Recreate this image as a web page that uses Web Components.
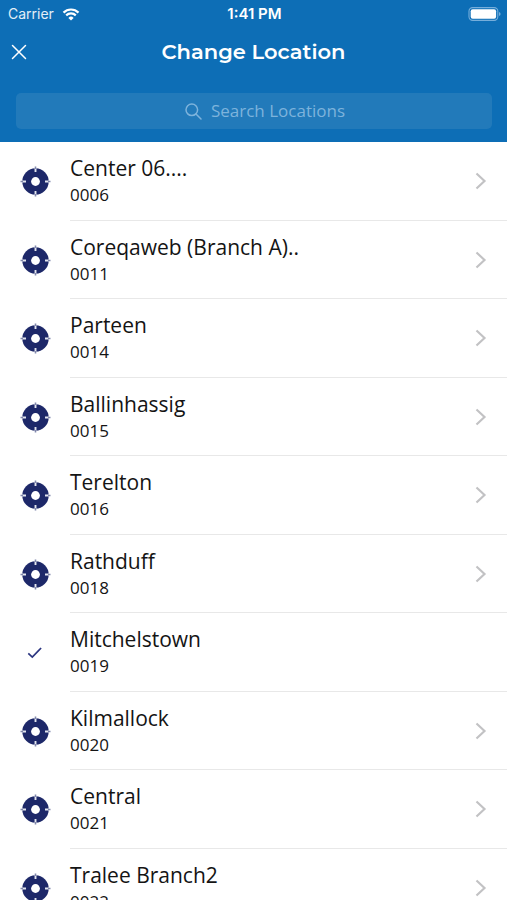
<!DOCTYPE html>
<html lang="en">
<head>
<meta charset="utf-8">
<meta name="viewport" content="width=device-width, initial-scale=1">
<title>Change Location</title>
<style>
  html, body { margin: 0; height: 100%; background: #fff; }
</style>
</head>
<body>
<location-screen></location-screen>
<script>
  const define = (name, html, setup) => {
    const template = document.createElement('template');
    template.innerHTML = html;
    customElements.define(name, class extends HTMLElement {
      constructor() {
        super();
        this.attachShadow({ mode: 'open' }).append(template.content.cloneNode(true));
      }
      connectedCallback() { if (setup) setup(this, this.shadowRoot); }
    });
  };

  define('status-bar', `
    <style>
      :host { display: grid; grid-template-columns: 1fr auto 1fr; align-items: center; height: 28px; padding: 0 6px 0 8px;
        font: 14px/28px Inter, "Liberation Sans", sans-serif; color: #fff; }
      .carrier { display: flex; align-items: center; gap: 8px; color: #e3eef7; }
      .time { font-size: 15px; font-weight: 600; }
      .battery { justify-self: end; }
      svg { display: block; }
    </style>
    <span class="carrier"><span>Carrier</span>
      <svg width="18" height="13" viewBox="0 0 17 13" fill="none" stroke="#fff" stroke-width="2.2" aria-label="Wi-Fi">
        <path d="M1 4.6a10.6 10.6 0 0 1 15 0M3.7 7.4a6.8 6.8 0 0 1 9.6 0"/>
        <path d="M8.500 12.600 5.900 9.900a3.700 3.700 0 0 1 5.200 0z" fill="#fff" stroke="none"/>
      </svg>
    </span>
    <span class="time">1:41 PM</span>
    <svg class="battery" width="33" height="14" viewBox="0 0 33 14" aria-label="Battery full">
      <rect x="1" y=".6" width="28.800" height="12.800" rx="3.600" fill="none" stroke="#76aedb" stroke-width="1.100"/>
      <rect x="2.700" y="2.300" width="25.400" height="9.400" rx="2" fill="#fff"/>
      <path d="M31 5v4q1.600-.5 1.600-2t-1.600-2" fill="#76aedb"/>
    </svg>`);

  define('title-bar', `
    <style>
      :host { display: grid; grid-template-columns: 38px 1fr 38px; align-items: center; height: 48px; color: #fff; }
      h1 { margin: 0; text-align: center; font: 600 21px/48px Montserrat, Inter, sans-serif; }
      button { display: grid; place-items: center; height: 38px; padding: 0; border: 0; background: none; color: inherit; cursor: pointer; }
    </style>
    <button type="button" aria-label="Close">
      <svg width="16" height="16" viewBox="0 0 16 16" fill="none" stroke="currentColor" stroke-width="1.500" stroke-linecap="round"><path d="M1.500 1.500l13 13M14.500 1.500l-13 13"/></svg>
    </button>
    <h1><slot></slot></h1>`);

  define('search-field', `
    <style>
      :host { display: block; padding: 17px 15px 13px 16px; }
      label { display: flex; justify-content: center; align-items: center; gap: 9px; height: 36px; padding-left: 22px; border-radius: 5px;
        background: #227aba; color: #7db3dc; cursor: text; }
      input { field-sizing: content; width: auto; padding: 0; border: 0; outline: 0; background: none; color: #fff;
        font: 17px/24px "Open Sans", "Noto Sans", sans-serif; }
      input::placeholder { color: #7db3dc; opacity: 1; }
    </style>
    <label>
      <svg width="17" height="17" viewBox="0 0 17 17" fill="none" stroke="currentColor" stroke-width="1.500" stroke-linecap="round"><circle cx="6.800" cy="6.800" r="5.800"/><path d="M11 11l5 5"/></svg>
      <input type="text" placeholder="Search Locations" aria-label="Search Locations">
    </label>`);

  define('location-row', `
    <style>
      :host { display: block; }
      button { display: flex; width: 100%; padding: 0; border: 0; background: none; text-align: left; color: #141414; cursor: pointer;
        font-family: "Open Sans", "Noto Sans", sans-serif; }
      .mark { flex: 0 0 70px; display: grid; place-items: center start; padding-left: 20px; box-sizing: border-box; }
      .body { flex: 1; display: flex; align-items: center; justify-content: space-between; min-width: 0;
        padding: 13px 20px 13px 0; border-bottom: 1px solid #e8e8e8; }
      :host(:nth-child(even)) .body { padding-bottom: 12px; }
      .name, .code { display: block; }
      .name { font-size: 21px; line-height: 27px; }
      .code { font-size: 17px; line-height: 25px; }
      .check, :host([selected]) .target, :host([selected]) .chevron { display: none; }
      :host([selected]) .check { display: block; }
    </style>
    <button type="button">
      <span class="mark">
        <svg class="target" width="31" height="31" viewBox="0 0 31 31">
          <circle cx="15.500" cy="15.500" r="13.200" fill="#1d2869"/>
          <circle cx="15.500" cy="15.500" r="4.400" fill="#fff"/>
          <path d="M15.500 2v4M15.500 25v4M2 15.500h4M25 15.500h4" stroke="#e4e6ef" stroke-width="1.900"/>
          <path d="M15.500 .5v2.500M15.500 28v2.500M.5 15.500h2.500M28 15.500h2.500" stroke="#8087ac" stroke-width="1.600"/>
        </svg>
        <svg class="check" width="31" height="31" viewBox="0 0 31 31" fill="none" stroke="#2b3580" stroke-width="1.700"><path d="M8.300 16.300l4 3.700 8.800-9"/></svg>
      </span>
      <span class="body">
        <span><span class="name"><slot></slot></span><span class="code"><slot name="code"></slot></span></span>
        <svg class="chevron" width="13" height="18" viewBox="0 0 13 18" fill="none" stroke="#c2c2c4" stroke-width="2.200"><path d="M2.500 1.500L10.500 9l-8 7.500"/></svg>
      </span>
    </button>`,
    (host, root) => root.querySelector('button').setAttribute('aria-pressed', host.hasAttribute('selected')));

  define('location-screen', `
    <style>
      :host { display: flex; flex-direction: column; height: 100%; }
      header { flex: none; background: #0d6eb6; }
      main { flex: 1; min-height: 0; overflow-y: auto; scrollbar-width: none; background: #fff; }
    </style>
    <header>
      <status-bar></status-bar>
      <title-bar>Change Location</title-bar>
      <search-field></search-field>
    </header>
    <main>
      <location-row>Center 06....<span slot="code">0006</span></location-row>
      <location-row>Coreqaweb (Branch A)..<span slot="code">0011</span></location-row>
      <location-row>Parteen<span slot="code">0014</span></location-row>
      <location-row>Ballinhassig<span slot="code">0015</span></location-row>
      <location-row>Terelton<span slot="code">0016</span></location-row>
      <location-row>Rathduff<span slot="code">0018</span></location-row>
      <location-row selected>Mitchelstown<span slot="code">0019</span></location-row>
      <location-row>Kilmallock<span slot="code">0020</span></location-row>
      <location-row>Central<span slot="code">0021</span></location-row>
      <location-row>Tralee Branch2<span slot="code">0022</span></location-row>
    </main>`);
</script>
</body>
</html>
